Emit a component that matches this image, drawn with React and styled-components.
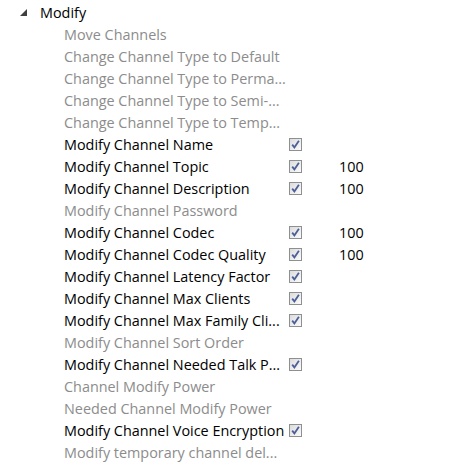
import styled, { createGlobalStyle } from "styled-components";

const Global = createGlobalStyle`
  body {
    margin: 0;
    background: #fff;
    font-family: "Open Sans", "Noto Sans", sans-serif;
  }
`;

const rows = [
  { name: "Move Channels" },
  { name: "Change Channel Type to Default" },
  { name: "Change Channel Type to Perma..." },
  { name: "Change Channel Type to Semi-..." },
  { name: "Change Channel Type to Temp..." },
  { name: "Modify Channel Name", on: true },
  { name: "Modify Channel Topic", on: true, value: 100 },
  { name: "Modify Channel Description", on: true, value: 100 },
  { name: "Modify Channel Password" },
  { name: "Modify Channel Codec", on: true, value: 100 },
  { name: "Modify Channel Codec Quality", on: true, value: 100 },
  { name: "Modify Channel Latency Factor", on: true },
  { name: "Modify Channel Max Clients", on: true },
  { name: "Modify Channel Max Family Cli...", on: true },
  { name: "Modify Channel Sort Order" },
  { name: "Modify Channel Needed Talk P...", on: true },
  { name: "Channel Modify Power" },
  { name: "Needed Channel Modify Power" },
  { name: "Modify Channel Voice Encryption", on: true },
  { name: "Modify temporary channel del..." },
];

const Tree = styled.div`
  padding-top: 1px;
  font-size: 14.4px;
`;

const Header = styled.div`
  display: flex;
  align-items: center;
  height: 22px;
  color: #000;
`;

const Expander = styled.span`
  width: 40px;
  display: flex;
  justify-content: flex-end;
  padding-right: 13px;
  box-sizing: border-box;
`;

const Row = styled.div`
  display: grid;
  grid-template-columns: 64px 225px 13px 37px 50px;
  align-items: center;
  height: 22px;
  color: ${(p) => (p.$on ? "#000" : "#8c8c8c")};
`;

const Name = styled.span`
  grid-column: 2;
  white-space: nowrap;
`;

const Box = styled.span`
  grid-column: 3;
  width: 11px;
  height: 11px;
  margin-top: 1px;
  border: 1px solid #8e8f8f;
  background: linear-gradient(135deg, #dcdcdc, #fbfbfb);
  display: flex;
  align-items: center;
  justify-content: center;
`;

const Value = styled.span`
  grid-column: 5;
`;

const Check = () => (
  <svg width="9" height="9" viewBox="0 0 9 9">
    <path d="M1.2 4.6 L3.4 7.4 L7.9 0.8" fill="none" stroke="#4b5e98" strokeWidth="1.8" />
  </svg>
);

export default function App() {
  return (
    <>
      <Global />
      <Tree>
        <Header>
          <Expander>
            <svg width="7" height="7" viewBox="0 0 7 7">
              <path d="M7 0 L7 7 L0 7 Z" fill="#404040" />
            </svg>
          </Expander>
          Modify
        </Header>
        {rows.map((r) => (
          <Row key={r.name} $on={r.on}>
            <Name>{r.name}</Name>
            {r.on && <Box><Check /></Box>}
            {r.value && <Value>{r.value}</Value>}
          </Row>
        ))}
      </Tree>
    </>
  );
}
